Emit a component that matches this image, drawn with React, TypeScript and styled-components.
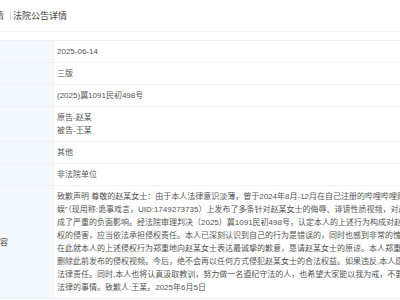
import React from "react";
import styled, { createGlobalStyle } from "styled-components";

const Global = createGlobalStyle`
  html, body { margin: 0; padding: 0; background: #ffffff; overflow: hidden; }
  body { font-family: "Liberation Sans", "Noto Sans CJK SC", sans-serif; }
`;

const Page = styled.div`
  margin-left: -40px;
  width: 700px;
`;

const Header = styled.div`
  display: flex;
  align-items: center;
  height: 31px;
  padding-left: 8px;
  border-bottom: 1px solid #f0f2f5;
  font-size: 9px;
  margin-bottom: 8px;
`;

const Crumb = styled.span<{ $active?: boolean }>`
  color: ${(p) => (p.$active ? "#444" : "#666")};
  line-height: 12px;
`;

const Divider = styled.span`
  width: 1px;
  height: 8px;
  background: #d9d9d9;
  margin: 0 2px 0 6px;
`;

const Table = styled.div`
  display: grid;
  grid-template-columns: 95px 1fr;
  border-top: 1px solid #edf1f5;
  font-size: 8px;
  line-height: 13px;
`;

const Label = styled.div`
  display: flex;
  align-items: center;
  background: #f3f8fd;
  color: #444;
  padding-left: 16px;
  border-bottom: 1px solid #edf1f5;
`;

const Value = styled.div`
  padding: 4px 2px 4px 2px;
  color: #555;
  border-bottom: 1px solid #edf1f5;
  white-space: pre-line;
`;

const rows: { label: string; value: string }[] = [
  { label: "日期", value: "2025-06-14" },
  { label: "版面", value: "三版" },
  { label: "案号", value: "(2025)冀1091民初498号" },
  { label: "当事人", value: "原告-赵某\n被告-王某" },
  { label: "类型", value: "其他" },
  { label: "单位", value: "非法院单位" },
  {
    label: "公告内容",
    value: [
      "致歉声明 尊敬的赵某女士：由于本人法律意识淡薄，曾于2024年8月-12月在自己注册的哔哩哔哩账号“诡事",
      "娱”（现用称:诡事戏言，UID:1749273735）上发布了多条针对赵某女士的侮辱、诽谤性质视频，对赵某女士的名誉造",
      "成了严重的负面影响。经法院审理判决（2025）冀1091民初498号，认定本人的上述行为构成对赵某女士名誉",
      "权的侵害，应当依法承担侵权责任。本人已深刻认识到自己的行为是错误的，同时也感到非常的愧疚。",
      "在此就本人的上述侵权行为郑重地向赵某女士表达最诚挚的歉意，恳请赵某女士的原谅。本人郑重承诺已",
      "删除此前发布的侵权视频。今后，绝不会再以任何方式侵犯赵某女士的合法权益。如果违反,本人愿承担",
      "法律责任。同时,本人也将认真汲取教训，努力做一名遵纪守法的人，也希望大家能以我为戒，不要做违反",
      "法律的事情。致歉人:王某。2025年6月5日",
    ].join("\n"),
  },
];

export default function App() {
  return (
    <Page>
      <Global />
      <Header>
        <Crumb>公告详情</Crumb>
        <Divider />
        <Crumb $active>法院公告详情</Crumb>
      </Header>
      <Table>
        {rows.map((r) => (
          <React.Fragment key={r.label}>
            <Label>{r.label}</Label>
            <Value>{r.value}</Value>
          </React.Fragment>
        ))}
      </Table>
    </Page>
  );
}
